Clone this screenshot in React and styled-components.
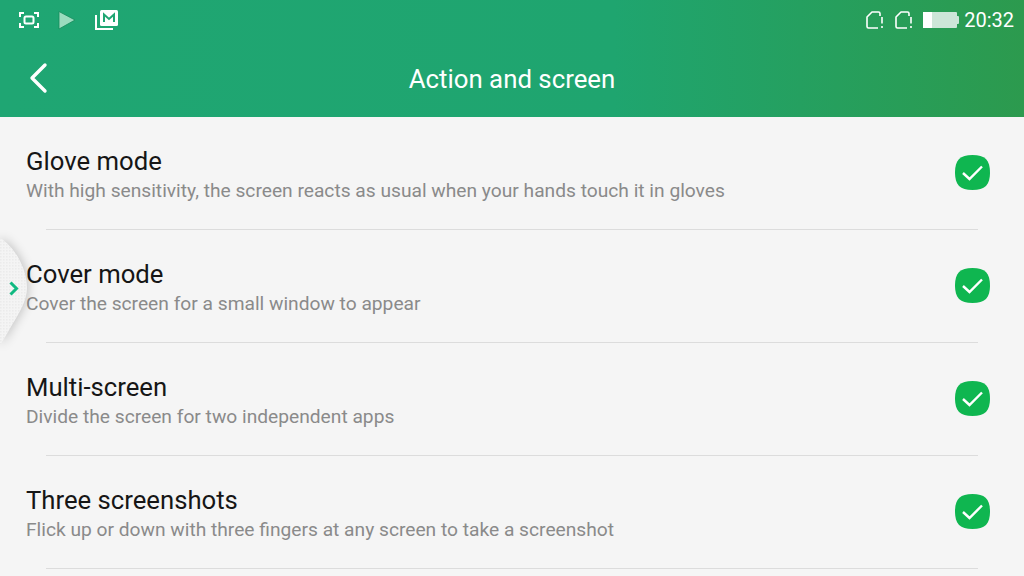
import React from 'react'
import styled, { createGlobalStyle } from 'styled-components'

const GlobalStyle = createGlobalStyle`
  html, body {
    margin: 0;
    padding: 0;
    background: #f5f5f5;
  }
  body {
    font-family: Roboto, "Noto Sans", sans-serif;
    overflow: hidden;
  }
`
const Screen = styled.div`
  position: relative;
  width: 1024px;
  height: 576px;
  overflow: hidden;
  background: #f5f5f5;
`
const Header = styled.header`
  height: 117px;
  background: linear-gradient(90deg, #1fa673 0%, #1fa56f 60%, #2c9a4e 100%);
  color: #fff;
`
const StatusBar = styled.div`
  height: 40px;
  padding: 0 10px 0 18px;
  display: flex;
  align-items: center;
  justify-content: space-between;
`
const IconGroup = styled.div`
  display: flex;
  align-items: center;
  gap: ${props => props.gap}px;
`
const Clock = styled.span`
  font-size: 20px;
  margin-left: -4px;
`
const TitleBar = styled.div`
  position: relative;
  height: 77px;
  display: flex;
  align-items: center;
  justify-content: center;
`
const Title = styled.h1`
  margin: 0;
  font-size: 25.8px;
  font-weight: 400;
`
const BackButton = styled.button`
  position: absolute;
  left: 28px;
  top: 21px;
  width: 22px;
  height: 34px;
  padding: 0;
  border: 0;
  background: none;
`
const List = styled.div`
  display: flex;
  flex-direction: column;
`
const Row = styled.div`
  position: relative;
  height: 113px;
  box-sizing: border-box;
  padding: 30px 34px 0 26px;
  display: flex;
  justify-content: space-between;
  &::after {
    content: '';
    position: absolute;
    left: 46px;
    right: 46px;
    bottom: 0;
    height: 1px;
    background: #dcdcdc;
  }
`
const RowText = styled.div`
  display: flex;
  flex-direction: column;
`
const RowTitle = styled.div`
  font-size: 25.7px;
  line-height: 28px;
  color: #161616;
`
const RowDesc = styled.div`
  margin-top: 4px;
  font-size: 19.2px;
  line-height: 24px;
  color: #8a8a8a;
`
const Check = styled.div`
  width: 35px;
  height: 35px;
  margin-top: 8px;
  line-height: 0;
`
const SideHandle = styled.div`
  position: absolute;
  left: 0;
  top: 208px;
  width: 44px;
  height: 160px;
  line-height: 0;
`

const ScreenshotIcon = () => (
  <svg width="22" height="20" viewBox="0 0 22 20" fill="none" stroke="#fff" strokeWidth="2">
    <path d="M2 7V3h4M16 3h4v4M20 13v4h-4M6 17H2v-4" />
    <rect x="6.5" y="6.5" width="9" height="7" rx="1.5" />
  </svg>
)
const PlayIcon = () => (
  <svg width="18" height="20" viewBox="0 0 18 20">
    <path d="M1 1.5L17 10 1 19z" fill="#9bdcbf" stroke="#178a5c" strokeWidth="0.8" />
  </svg>
)
const MailIcon = () => (
  <svg width="26" height="22" viewBox="0 0 26 22" fill="none">
    <path d="M2 6v14h17" stroke="#fff" strokeWidth="2" />
    <rect x="6" y="1" width="18" height="16" rx="1.5" fill="#fff" />
    <path d="M10 13V5.5l5 4.5 5-4.5V13" stroke="#1fa673" strokeWidth="2" />
  </svg>
)
const SimIcon = () => (
  <svg width="20" height="20" viewBox="0 0 20 20" fill="none" stroke="#fff" strokeWidth="1.6">
    <path d="M13 18H3.5a1.5 1.5 0 0 1-1.5-1.5V7l5-5h6.5A1.5 1.5 0 0 1 15 3.500V6" strokeLinejoin="round" />
    <path d="M17 7v6.500M17 16v2" />
  </svg>
)
const BatteryIcon = () => (
  <svg width="36" height="16" viewBox="0 0 36 16">
    <rect x="0" y="0" width="34" height="16" rx="1" fill="#cde6d8" />
    <path d="M34 4h1a1 1 0 0 1 1 1v6a1 1 0 0 1-1 1h-1z" fill="#cde6d8" />
    <rect x="0" y="0" width="9" height="16" fill="#fff" />
  </svg>
)
const BackIcon = () => (
  <svg width="22" height="34" viewBox="0 0 22 34" fill="none" stroke="#fff" strokeWidth="3.4" strokeLinecap="round" strokeLinejoin="round">
    <path d="M17 4L4 17l13 13" />
  </svg>
)
const CheckIcon = () => (
  <svg width="35" height="35" viewBox="0 0 35 35">
    <path d="M17.500 0C30 0 35 5 35 17.500S30 35 17.500 35 0 30 0 17.500 5 0 17.500 0z" fill="#0fb650" />
    <path d="M8 18l6.500 6L27 11.500" fill="none" stroke="#fff" strokeWidth="2.4" />
  </svg>
)
const handleShape = 'M0 30C7 34 14 42 18 49C23 58 27 68 27 80C27 92 20 104 12 117C8 124 4 131 0 137z'
const HandleIcon = () => (
  <svg width="44" height="160" viewBox="0 0 44 160">
    <defs>
      <pattern id="dots" width="3" height="3" patternUnits="userSpaceOnUse">
        <rect width="3" height="3" fill="#f4f4f4" />
        <rect width="1.500" height="1.500" fill="#ebebeb" />
      </pattern>
      <filter id="soft" x="-80%" y="-40%" width="260%" height="180%">
        <feGaussianBlur stdDeviation="6" />
      </filter>
    </defs>
    <path d={handleShape} fill="#000" opacity="0.26" filter="url(#soft)" />
    <path d={handleShape} fill="url(#dots)" />
    <path d="M10.500 74.500l6 6-6 6" fill="none" stroke="#10b981" strokeWidth="3" />
  </svg>
)

const items = [
  { title: 'Glove mode', desc: 'With high sensitivity, the screen reacts as usual when your hands touch it in gloves' },
  { title: 'Cover mode', desc: 'Cover the screen for a small window to appear' },
  { title: 'Multi-screen', desc: 'Divide the screen for two independent apps' },
  { title: 'Three screenshots', desc: 'Flick up or down with three fingers at any screen to take a screenshot' },
]

const App = () => (
  <Screen>
    <GlobalStyle />
    <Header>
      <StatusBar>
        <IconGroup gap={18}>
          <ScreenshotIcon />
          <PlayIcon />
          <MailIcon />
        </IconGroup>
        <IconGroup gap={9}>
          <SimIcon />
          <SimIcon />
          <BatteryIcon />
          <Clock>20:32</Clock>
        </IconGroup>
      </StatusBar>
      <TitleBar>
        <BackButton aria-label="Back"><BackIcon /></BackButton>
        <Title>Action and screen</Title>
      </TitleBar>
    </Header>
    <List>
      {items.map(item => (
        <Row key={item.title}>
          <RowText>
            <RowTitle>{item.title}</RowTitle>
            <RowDesc>{item.desc}</RowDesc>
          </RowText>
          <Check><CheckIcon /></Check>
        </Row>
      ))}
    </List>
    <SideHandle><HandleIcon /></SideHandle>
  </Screen>
)

export default App
